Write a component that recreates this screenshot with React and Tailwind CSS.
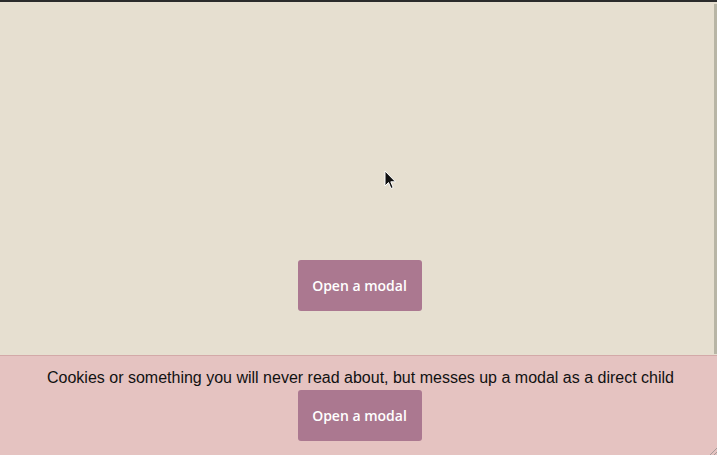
export default function App() {
  return (
    <div className="w-[717px] h-[455px] overflow-hidden flex flex-col bg-[#e6dfd0] relative">
      {/* top edge */}
      <div className="h-[2px] bg-[#2b2b2b]" />

      {/* main area */}
      <div className="relative h-[353px] flex flex-col items-center pl-[2px] pt-[258px]">
        <button className="w-[124px] h-[51px] rounded-[3px] bg-[#ab7890] text-white text-[14px] font-semibold font-['Open_Sans',sans-serif]">
          Open a modal
        </button>
        {/* scrollbar */}
        <div className="absolute right-0 top-[2px] bottom-[1px] w-[3px] bg-[#b8b5a5]" />
        {/* cursor */}
        <svg className="absolute left-[384px] top-[168px]" width="13" height="20" viewBox="0 0 13 20">
          <path d="M1 1 L1 16 L4.5 12.5 L7 18.5 L9.2 17.5 L6.8 11.8 L11.5 11.8 Z" fill="#111" stroke="#fff" strokeWidth="1" />
        </svg>
      </div>

      {/* footer */}
      <div className="flex-1 bg-[#e5c3c1] border-t border-[#d3a9a8] flex flex-col items-center pt-[12px] relative">
        <p className="pl-[4px] text-[16px] leading-[20px] text-[#111] font-['Liberation_Sans',Arial,sans-serif]">
          Cookies or something you will never read about, but messes up a modal as a direct child
        </p>
        <button className="ml-[2px] mt-[2px] w-[124px] h-[51px] rounded-[3px] bg-[#ab7890] text-white text-[14px] font-semibold font-['Open_Sans',sans-serif]">
          Open a modal
        </button>
        {/* resize grip */}
        <svg className="absolute right-0 bottom-0" width="10" height="10" viewBox="0 0 10 10">
          <path d="M10 3 L3 10 M10 7 L7 10" stroke="#a89c9a" strokeWidth="1" />
        </svg>
      </div>
    </div>
  )
}
